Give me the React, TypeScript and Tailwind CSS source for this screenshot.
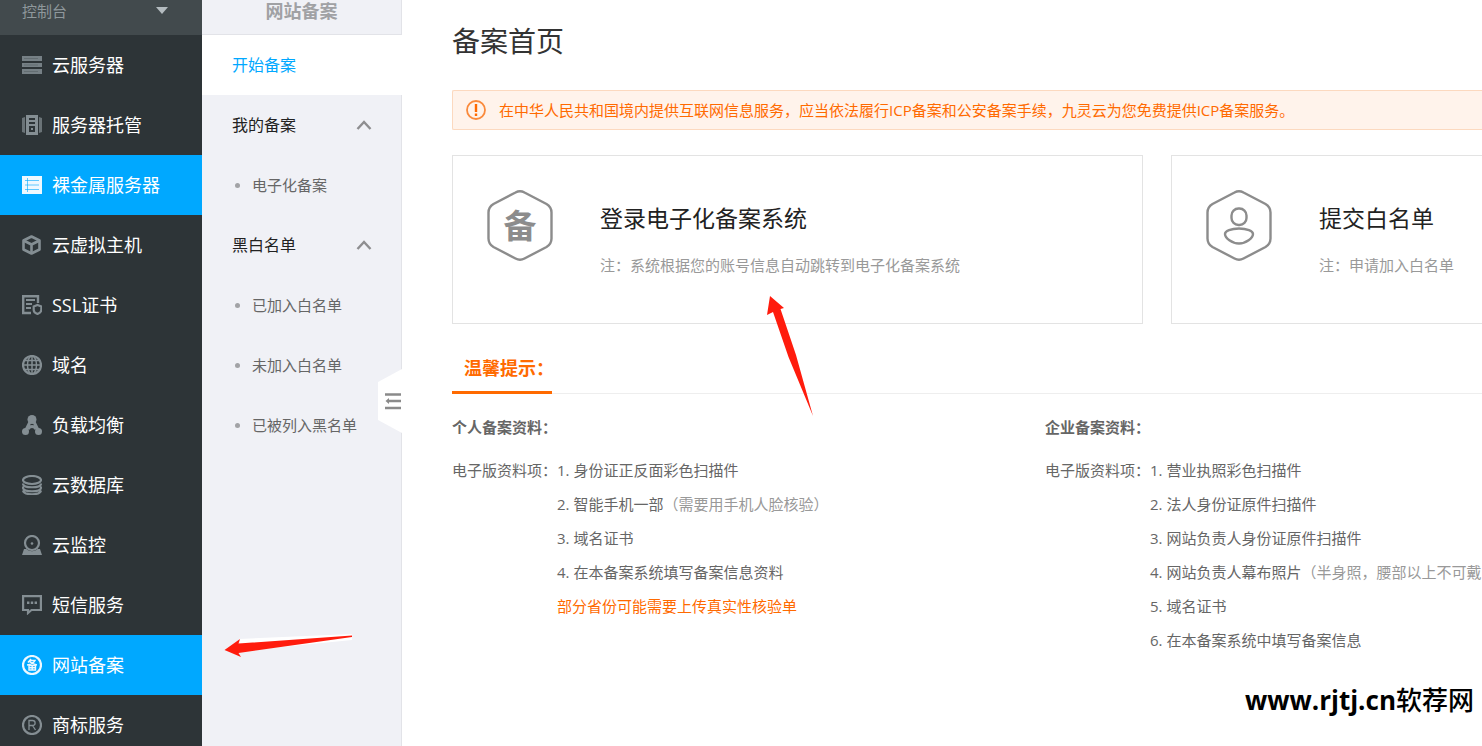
import { useState, type ReactNode } from 'react'
import clsx from 'clsx'

interface NavItem {
  label: string
  icon: ReactNode
  active?: boolean
}

interface NavGroup {
  title: string
  items: string[]
}

interface TipLine {
  text: string
  note?: string
}

const navItems: NavItem[] = [
  {
    label: '云服务器',
    icon: (
      <g>
        <path fill="currentColor" opacity=".85" d="M0 1h20v5H0zM0 8h20v4H0zM0 14h20v5H0z" />
        <path stroke="#2d3437" strokeWidth="1" d="M2 3.5h14M2 10h14M2 16.5h14" opacity=".25" />
      </g>
    ),
  },
  {
    label: '服务器托管',
    icon: (
      <g>
        <path fill="currentColor" opacity=".7" d="M0 3l3-1v16l-3-1zM20 3l-3-1v16l3-1z" />
        <path fill="currentColor" fillRule="evenodd" d="M4 0h12v20H4zM7 3v2h6V3zM7 7v2h6V7zM7 11v6h6v-6z" />
        <path fill="currentColor" d="M9 13h2v2H9z" />
      </g>
    ),
  },
  {
    label: '裸金属服务器',
    active: true,
    icon: (
      <g>
        <path fill="currentColor" d="M0 1h20v18H0z" />
        <path stroke="#00a8ff" strokeWidth="1" opacity=".6" d="M3 5.5h14M3 10h14M3 14.5h14M5.5 3v14" />
      </g>
    ),
  },
  {
    label: '云虚拟主机',
    icon: (
      <g fill="none" stroke="currentColor" strokeWidth="2.6" strokeLinejoin="round">
        <path d="M9.500 1.500l8 4v9l-8 4-8-4v-9z" />
        <path d="M1.500 5.500l8 4 8-4M9.500 9.500v9" />
      </g>
    ),
  },
  {
    label: 'SSL证书',
    icon: (
      <g>
        <path fill="none" stroke="currentColor" strokeWidth="2.400" d="M16 8V1.200H1.200V18H9" />
        <path stroke="currentColor" strokeWidth="1.800" d="M4 5h9M4 9h6M4 13h5" />
        <path fill="none" stroke="currentColor" strokeWidth="2.200" d="M15.500 10l3.800 1.500V15c0 2-2 3.300-3.800 4-1.800-.7-3.800-2-3.800-4v-3.500z" />
      </g>
    ),
  },
  {
    label: '域名',
    icon: (
      <g fill="none" stroke="currentColor">
        <circle cx="10" cy="10" r="9" strokeWidth="2.200" />
        <ellipse cx="10" cy="10" rx="4.500" ry="9" strokeWidth="1.500" />
        <path strokeWidth="1.500" d="M10 1v18M1 10h18M2.500 5.500h15M2.500 14.500h15" />
      </g>
    ),
  },
  {
    label: '负载均衡',
    icon: (
      <g>
        <circle cx="10" cy="4.500" r="4.500" fill="currentColor" />
        <circle cx="3.500" cy="16.500" r="3.500" fill="currentColor" />
        <circle cx="16.500" cy="16.500" r="3.500" fill="currentColor" />
        <path fill="none" stroke="currentColor" strokeWidth="3" d="M8 7l-4 8M12 7l4 8M6 14.500c1-4 7-4 8 0" />
      </g>
    ),
  },
  {
    label: '云数据库',
    icon: (
      <g fill="none" stroke="currentColor" strokeWidth="2.200">
        <ellipse cx="10" cy="5" rx="9" ry="4" />
        <path d="M1 8.500c0 5 18 5 18 0M1 11.500v1c0 5 18 5 18 0v-1M1 15.500c1 5 17 5 18 0" />
      </g>
    ),
  },
  {
    label: '云监控',
    icon: (
      <g>
        <circle cx="10" cy="8" r="7" fill="none" stroke="currentColor" strokeWidth="2.200" />
        <circle cx="10" cy="8.500" r="1.300" fill="currentColor" />
        <path fill="currentColor" d="M2 14h2.500c3 3 8 3 11 0H18l2 6H0z" />
      </g>
    ),
  },
  {
    label: '短信服务',
    icon: (
      <g>
        <path fill="none" stroke="currentColor" strokeWidth="2.200" d="M1.100 1.100h17.800V15H9.500L6 18v-3H1.100z" />
        <path fill="currentColor" d="M5 6.500h2.400v2.400H5zM8.800 6.500h2.400v2.400H8.800zM12.600 6.500H15v2.400h-2.400z" />
      </g>
    ),
  },
  {
    label: '网站备案',
    active: true,
    icon: (
      <g>
        <circle cx="10" cy="10" r="9" fill="none" stroke="currentColor" strokeWidth="2.200" />
        <path fill="none" stroke="currentColor" strokeWidth="1.500" d="M9 4L6 7.500M8 5.500h5c-1 2-4 4-8 4.500M7.500 6.500c2 2 4 3 7.500 3.500" />
        <path fill="none" stroke="currentColor" strokeWidth="1.400" d="M7 10.500h6.500v4.500H7zM7 12.800h6.500M10.200 10.500V15" />
      </g>
    ),
  },
  {
    label: '商标服务',
    icon: (
      <g fill="none" stroke="currentColor">
        <circle cx="10" cy="10" r="9" strokeWidth="2.200" />
        <path strokeWidth="1.300" d="M7 15V5.500h3.500c3.500 0 3.500 5 0 5H7M10.500 10.500L13.500 15" />
      </g>
    ),
  },
]

const groups: NavGroup[] = [
  { title: '我的备案', items: ['电子化备案'] },
  { title: '黑白名单', items: ['已加入白名单', '未加入白名单', '已被列入黑名单'] },
]

const personalTips: TipLine[] = [
  { text: '身份证正反面彩色扫描件' },
  { text: '智能手机一部', note: '（需要用手机人脸核验）' },
  { text: '域名证书' },
  { text: '在本备案系统填写备案信息资料' },
]

const companyTips: TipLine[] = [
  { text: '营业执照彩色扫描件' },
  { text: '法人身份证原件扫描件' },
  { text: '网站负责人身份证原件扫描件' },
  { text: '网站负责人幕布照片', note: '（半身照，腰部以上不可戴' },
  { text: '域名证书' },
  { text: '在本备案系统中填写备案信息' },
]

function Sidebar() {
  return (
    <nav className="w-[202px] shrink-0 bg-[#2d3437] text-white">
      <button type="button" className="flex h-[35px] w-full items-start justify-between bg-[#424a4d] pr-[34px] pl-[22px] text-[15px] leading-[22px] text-[#8f989c]">
        控制台
        <svg className="mt-[7px] h-2 w-3" viewBox="0 0 12 8" aria-hidden="true">
          <path d="M0 0h12L6 7z" fill="#b4bcc0" />
        </svg>
      </button>
      {navItems.map((item) => (
        <a
          key={item.label}
          href="#"
          className={clsx('flex h-[60px] items-center gap-2.5 pl-[22px] text-[18px]', item.active && 'bg-[#00a8ff]')}
        >
          <svg
            className={clsx('size-5', item.active ? 'text-[#eef8ff]' : 'text-[#848e93]')}
            viewBox="0 0 20 20"
            fill="none"
            aria-hidden="true"
          >
            {item.icon}
          </svg>
          {item.label}
        </a>
      ))}
    </nav>
  )
}

function GroupSection({ group }: { group: NavGroup }) {
  const [open, setOpen] = useState(true)

  return (
    <div>
      <button
        type="button"
        aria-expanded={open}
        onClick={() => setOpen(!open)}
        className="flex h-[60px] w-full items-center justify-between pr-[29px] pl-[30px] text-[16px] text-[#222]"
      >
        {group.title}
        <svg className={clsx('h-2.5 w-4', !open && 'rotate-180')} viewBox="0 0 16 10" fill="none" aria-hidden="true">
          <path d="M1.500 9L8 2l6.500 7" stroke="#8e8e90" strokeWidth="2.400" />
        </svg>
      </button>
      {open &&
        group.items.map((label) => (
          <a key={label} href="#" className="flex h-[60px] items-center gap-3 pl-8 text-[15px] text-[#666]">
            <span className="ml-px size-[5px] rounded-full bg-[#a2a3a6]" />
            {label}
          </a>
        ))}
    </div>
  )
}

function SubMenu() {
  return (
    <aside className="relative w-[200px] shrink-0 border-r border-[#e2e3e8] bg-[#f0f1f6]">
      <h2 className="h-[35px] border-b border-[#e2e3e8] text-center text-[18px] leading-[22px] font-bold text-[#a0a1a4]">
        网站备案
      </h2>
      <a href="#" className="-mr-px flex h-[60px] items-center bg-white pl-[30px] text-[16px] text-[#00a8ff]">
        开始备案
      </a>
      {groups.map((group) => (
        <GroupSection key={group.title} group={group} />
      ))}
      {/* collapse handle, hangs on the right edge */}
      <button type="button" aria-label="收起菜单" className="absolute top-[369px] -right-px h-16 w-[25px]">
        <svg viewBox="0 0 25 64" fill="none" aria-hidden="true">
          <path d="M25 0L1 13v38l24 13z" fill="#fff" />
          <path d="M8 25.500h16M12 32h12M8 39h16" stroke="#8a8a8a" strokeWidth="2.400" />
          <path d="M12 29v6L8.500 32z" fill="#8a8a8a" />
        </svg>
      </button>
    </aside>
  )
}

function HexIcon({ children }: { children: ReactNode }) {
  return (
    <svg className="mt-[34px] h-[71px] w-[66px] shrink-0" viewBox="0 0 66 71" fill="none" aria-hidden="true">
      <path
        d="M28.500 2.500Q33 0 37.500 2.500L59.500 14Q64.500 17 64.500 22.500V48.500Q64.500 54 59.500 57L37.500 68.500Q33 71 28.500 68.500L6.500 57Q1.500 54 1.500 48.500V22.500Q1.500 17 6.500 14Z"
        stroke="#8c8c8c"
        strokeWidth="2.400"
      />
      {children}
    </svg>
  )
}

interface EntryCardProps {
  icon: ReactNode
  title: string
  note: string
  className?: string
}

function EntryCard({ icon, title, note, className }: EntryCardProps) {
  return (
    <a href="#" className={clsx('flex h-[169px] items-start gap-[47px] border border-[#e3e3e3] pl-[34px] whitespace-nowrap', className)}>
      <HexIcon>{icon}</HexIcon>
      <div className="pt-[46px]">
        <h3 className="text-[23px] leading-8 text-[#222]">{title}</h3>
        <p className="mt-[19px] text-[15px] leading-6 text-[#999]">{note}</p>
      </div>
    </a>
  )
}

interface TipColumnProps {
  title: string
  lines: TipLine[]
  extra?: string
}

function TipColumn({ title, lines, extra }: TipColumnProps) {
  return (
    <section className="text-[15px] leading-[34px] whitespace-nowrap text-[#666]">
      <h4 className="font-bold">{title}</h4>
      <div className="mt-[9px] flex">
        <span>电子版资料项：</span>
        <div>
          <ol>
            {lines.map((line, i) => (
              <li key={line.text}>
                {i + 1}. {line.text}
                {line.note && <span className="text-[#999]">{line.note}</span>}
              </li>
            ))}
          </ol>
          {extra && <p className="text-[#ff6a00]">{extra}</p>}
        </div>
      </div>
    </section>
  )
}

export default function App() {
  return (
    <div className="relative flex h-screen overflow-hidden bg-white font-['Open_Sans','Noto_Sans_CJK_SC',sans-serif]">
      <Sidebar />
      <SubMenu />

      <main className="min-w-0 flex-1 pt-5 pl-[50px]">
        <h1 className="text-[28px] leading-[42px] text-[#333]">备案首页</h1>

        <div className="mt-7 flex h-10 items-center gap-[13px] rounded-l-xs border border-r-0 border-[#fcd9bf] bg-[#fff3eb] pl-[13px] text-[15px] whitespace-nowrap text-[#ff6a00]">
          <svg className="size-5" viewBox="0 0 20 20" fill="none" aria-hidden="true">
            <circle cx="10" cy="10" r="9" stroke="#fa8a3c" strokeWidth="1.800" />
            <path d="M10 4v8M10 13.500V16" stroke="#ff6a00" strokeWidth="2.400" />
          </svg>
          在中华人民共和国境内提供互联网信息服务，应当依法履行ICP备案和公安备案手续，九灵云为您免费提供ICP备案服务。
        </div>

        <div className="mt-[25px] grid grid-cols-[minmax(0,20fr)_minmax(0,9fr)] gap-7">
          <EntryCard
            title="登录电子化备案系统"
            note="注：系统根据您的账号信息自动跳转到电子化备案系统"
            icon={
              <text x="33" y="48" textAnchor="middle" fontSize="33" fontWeight="700" fill="#8c8c8c">
                备
              </text>
            }
          />
          <EntryCard
            title="提交白名单"
            note="注：申请加入白名单"
            className="border-r-0"
            icon={
              <g stroke="#8c8c8c" strokeWidth="2.400">
                <rect x="25.500" y="18.500" width="15" height="16.500" rx="7" />
                <path d="M33 38.500c8 0 14 2.500 14 5.500 0 4-7 9.500-14 9.500s-14-5.500-14-9.500c0-3 6-5.500 14-5.500z" />
              </g>
            }
          />
        </div>

        <div className="mt-[21px] border-b border-[#eee]">
          <h2 className="-mb-px h-[49px] w-[100px] border-b-3 border-[#ff6a00] pl-3 text-[18px] leading-[46px] font-bold whitespace-nowrap text-[#ff6a00]">
            温馨提示：
          </h2>
        </div>

        <div className="mt-4 grid grid-cols-[minmax(0,19fr)_minmax(0,14fr)]">
          <TipColumn title="个人备案资料：" lines={personalTips} extra="部分省份可能需要上传真实性核验单" />
          <TipColumn title="企业备案资料：" lines={companyTips} />
        </div>
      </main>

      {/* pointer arrows drawn over the page */}
      <svg className="pointer-events-none absolute top-[295px] left-[766px] h-[122px] w-12" viewBox="0 0 48 122" aria-hidden="true">
        <path d="M4 1L18 13L14.500 14L30 60L47 121L22.500 62L7 17L1 20Z" fill="#ff1c0d" />
      </svg>
      <svg className="pointer-events-none absolute top-[633px] left-[224px] h-6 w-[130px]" viewBox="0 0 130 24" aria-hidden="true">
        <path d="M15 2L15 6L128 1V7L16 18Z" fill="#fff" />
        <path d="M0.500 17L16 6L14.500 10.500L128 2.500V4L14.500 20L17 24Z" fill="#ff1c0d" />
      </svg>

      <p className="absolute right-2 bottom-7 text-[26px] leading-9 font-medium text-black">
        <span className="font-bold">www.rjtj.cn</span>软荐网
      </p>
    </div>
  )
}
